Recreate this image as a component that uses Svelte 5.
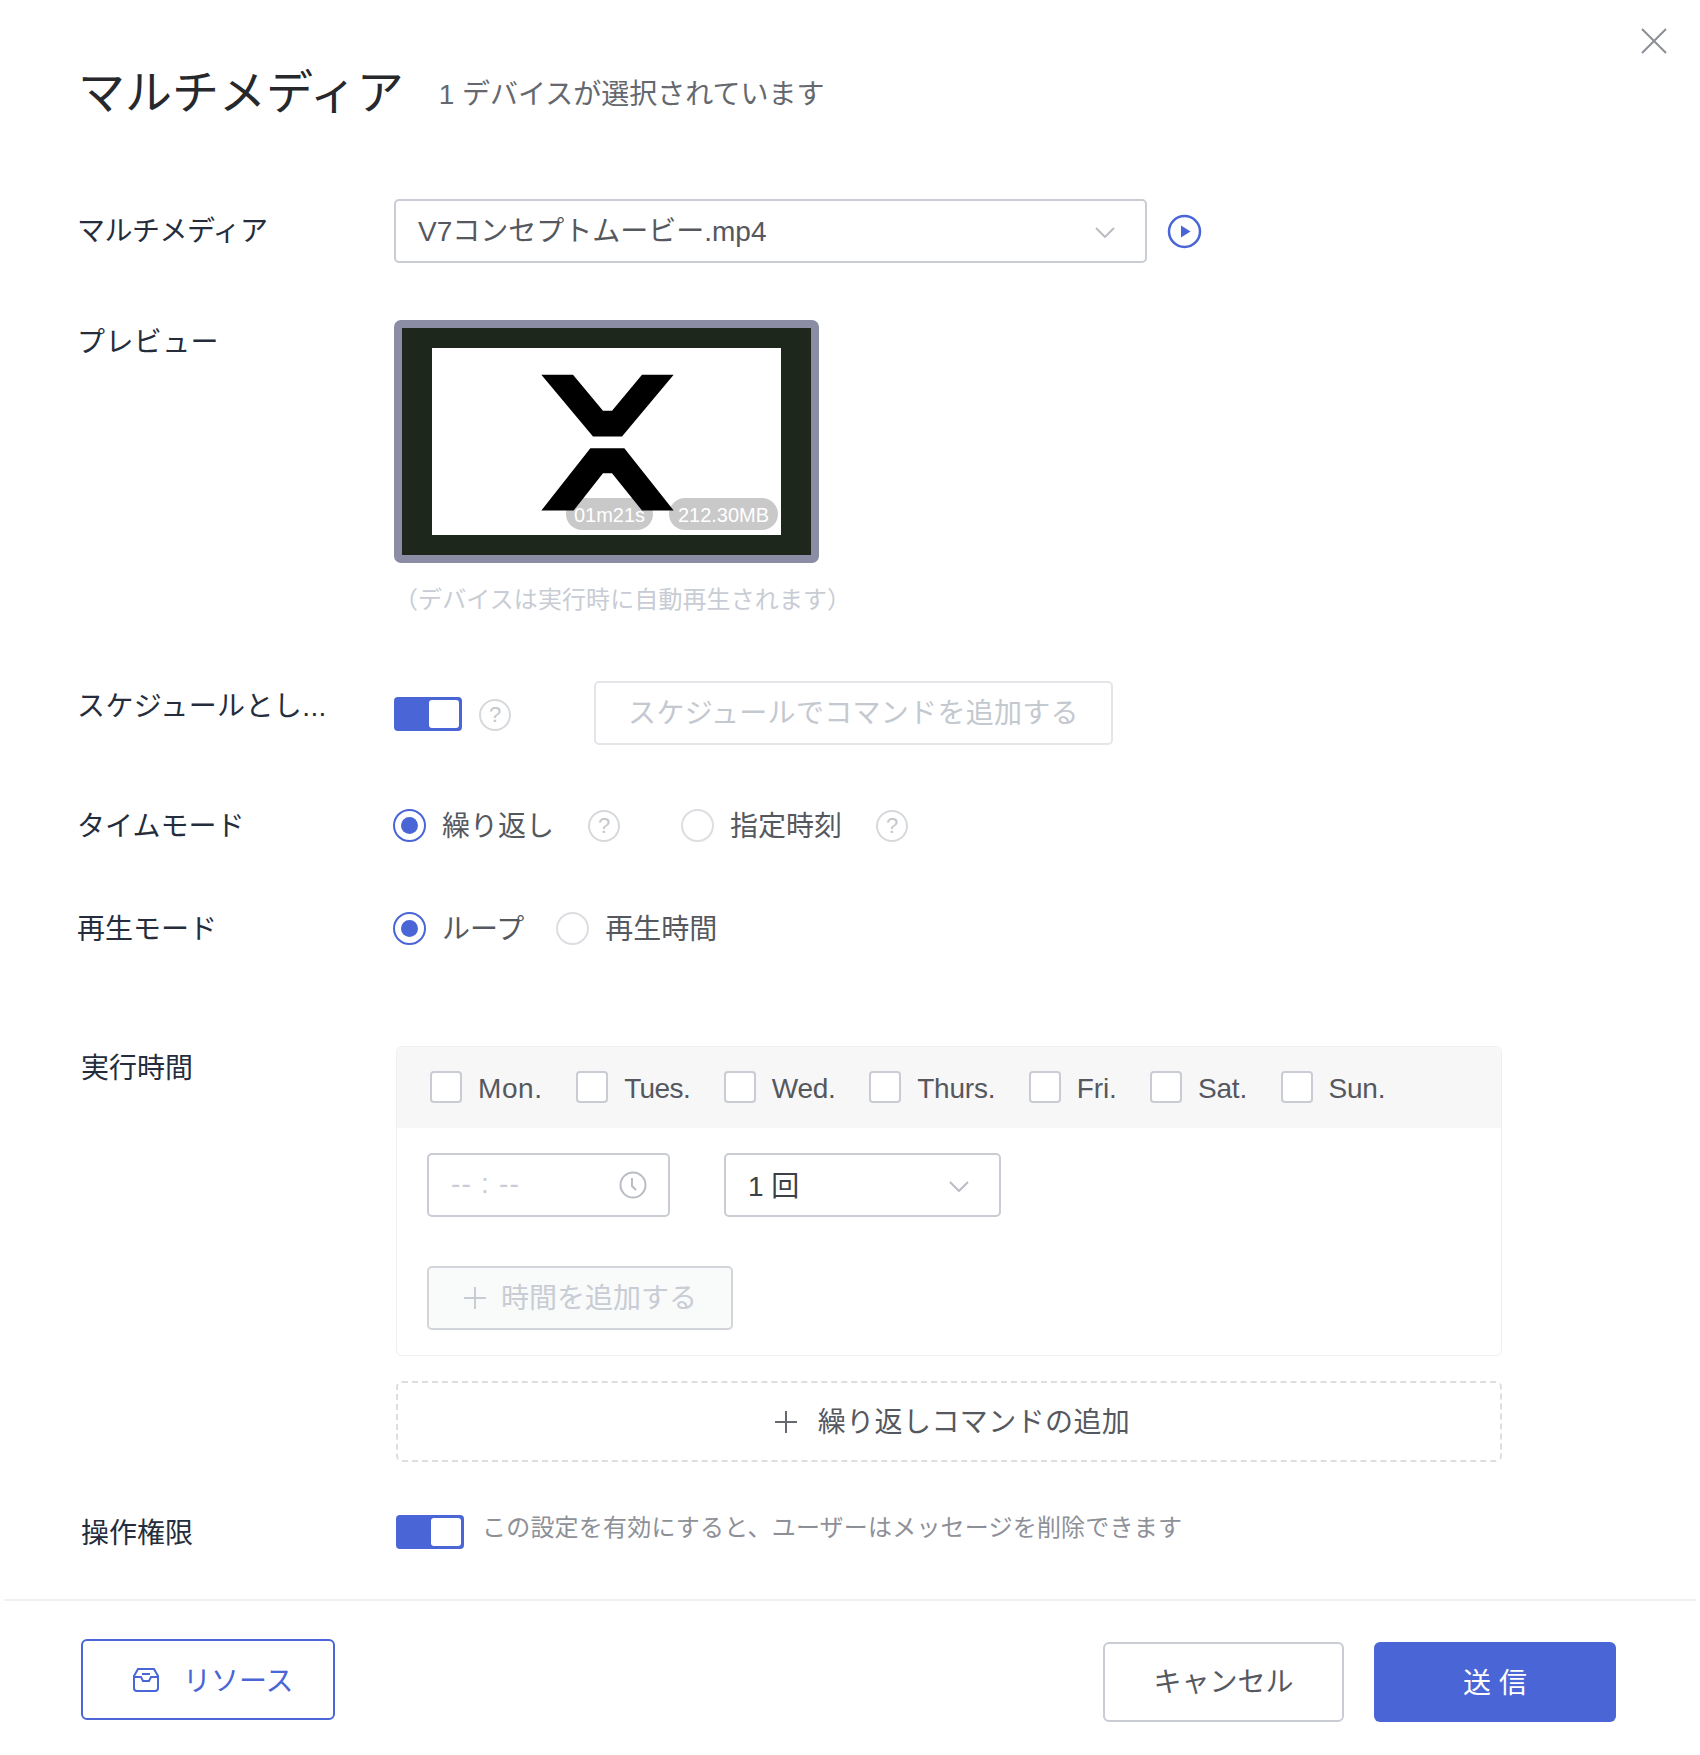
<script>
  const days = ['Mon.', 'Tues.', 'Wed.', 'Thurs.', 'Fri.', 'Sat.', 'Sun.'];
</script>

{#snippet help()}
  <span class="help">?</span>
{/snippet}

{#snippet chevron()}
  <svg class="chevron" viewBox="0 0 20 11" width="20" height="11" fill="none" stroke="#b9bcc3" stroke-width="2"><path d="M1 1l9 9 9-9" /></svg>
{/snippet}

{#snippet plus(color)}
  <svg class="plus" viewBox="0 0 24 24" width="24" height="24" stroke={color} stroke-width="2"><path d="M12 1v22M1 12h22" /></svg>
{/snippet}

<div class="dialog">
  <button class="close" aria-label="close">
    <svg viewBox="0 0 26 26" width="26" height="26" stroke="#8b8e95" stroke-width="2"><path d="M1 1l24 24M25 1L1 25" /></svg>
  </button>

  <header class="head">
    <h1>マルチメディア</h1>
    <span class="sub">1 デバイスが選択されています</span>
  </header>

  <section class="form">
    <div class="row media">
      <div class="label tight">マルチメディア</div>
      <div class="select main">
        <span>V7コンセプトムービー.mp4</span>
        {@render chevron()}
      </div>
      <svg class="play" viewBox="0 0 35 35" width="35" height="35"><circle cx="17.500" cy="17.500" r="15.500" fill="none" stroke="#4a65d6" stroke-width="2.500" /><path d="M14 11.500l9.500 6-9.500 6z" fill="#4a65d6" /></svg>
    </div>

    <div class="row preview-row">
      <div class="label short wide">プレビュー</div>
      <div class="preview-col">
        <div class="frame">
          <div class="screen">
            <span class="badge b1"><span class="badge-text">01m21s</span></span>
            <span class="badge b2"><span class="badge-text">212.30MB</span></span>
            <svg class="logo" viewBox="185 145 1047 560">
              <path d="M513 225H608L698 333H725L815 225H910L755 410H668Z" />
              <path d="M660 445H762L910 632H815L725 520H698L610 632H513Z" />
            </svg>
          </div>
        </div>
        <div class="hint">（デバイスは実行時に自動再生されます）</div>
      </div>
    </div>

    <div class="row schedule">
      <div class="label up">スケジュールとし...</div>
      <span class="switch"></span>
      {@render help()}
      <button class="ghost"><span>スケジュールでコマンドを追加する</span></button>
    </div>

    <div class="row radios first">
      <div class="label">タイムモード</div>
      <label class="radio lead"><i class="on"></i><span>繰り返し</span></label>
      {@render help()}
      <label class="radio second"><i></i><span>指定時刻</span></label>
      {@render help()}
    </div>

    <div class="row radios next">
      <div class="label">再生モード</div>
      <label class="radio lead"><i class="on"></i><span>ループ</span></label>
      <label class="radio third"><i></i><span>再生時間</span></label>
    </div>
  </section>

  <section class="form two">
    <div class="row exec">
      <div class="label short">実行時間</div>
      <div class="exec-col">
        <div class="panel">
          <div class="days">
            {#each days as day}
              <label class="day"><i></i><span>{day}</span></label>
            {/each}
          </div>
          <div class="panel-body">
            <div class="inputs">
              <div class="time">
                <span>-- : --</span>
                <svg viewBox="0 0 28 28" width="28" height="28" fill="none" stroke="#b9bcc3" stroke-width="2"><circle cx="14" cy="14" r="12.500" /><path d="M13 7v8l4 4" /></svg>
              </div>
              <div class="select count">
                <span>1 回</span>
                {@render chevron()}
              </div>
            </div>
            <button class="add-time">{@render plus('#c8ccd4')}<span>時間を追加する</span></button>
          </div>
        </div>
        <button class="dashed">{@render plus('#666a70')}<span>繰り返しコマンドの追加</span></button>
      </div>
    </div>

    <div class="row perm">
      <div class="label">操作権限</div>
      <span class="switch"></span>
      <span class="perm-text">この設定を有効にすると、ユーザーはメッセージを削除できます</span>
    </div>
  </section>

  <div class="divider"></div>

  <footer class="foot">
    <button class="resource">
      <svg viewBox="0 0 28 26" width="28" height="26" fill="none" stroke="#4a65d6" stroke-width="2"><path d="M6 2h16l4 7v12a3 3 0 0 1-3 3H5a3 3 0 0 1-3-3V9z" /><path d="M2 10h7l2 4h6l2-4h7" /><path d="M10 7h8" /></svg>
      <span>リソース</span>
    </button>
    <div class="foot-right">
      <button class="cancel"><span>キャンセル</span></button>
      <button class="send"><span>送 信</span></button>
    </div>
  </footer>
</div>

<style>
  :global(body) {
    margin: 0;
    background: #fff;
  }

  .dialog {
    position: relative;
    width: 1700px;
    height: 1755px;
    box-sizing: border-box;
    overflow: hidden;
    font-family: "Liberation Sans", "Noto Sans CJK JP", sans-serif;
    font-size: 28px;
    color: #55585e;
    background: #fff;
  }

  button {
    font: inherit;
    background: none;
    padding: 0;
    margin: 0;
    cursor: pointer;
  }

  button span,
  .select span {
    position: relative;
    top: -2px;
  }

  .close {
    position: absolute;
    top: 28px;
    right: 33px;
    width: 26px;
    height: 26px;
    border: 0;
    line-height: 0;
  }

  .head {
    display: flex;
    align-items: center;
    padding: 62px 0 0 78px;
    height: 60px;
  }

  h1 {
    margin: 2px 0 0;
    font-size: 47px;
    font-weight: 400;
    line-height: 60px;
    color: #26282c;
  }

  .sub {
    margin: 6px 0 0 35px;
    line-height: 60px;
    color: #65686e;
  }

  .form {
    padding: 77px 0 0 77px;
  }

  .form.two {
    padding: 98px 0 0 81px;
  }

  .row {
    display: flex;
    align-items: center;
  }

  .label {
    position: relative;
    top: 2px;
    flex: none;
    width: 317px;
    color: #252d3c;
    line-height: 40px;
  }

  .label.tight {
    top: 1px;
    letter-spacing: -0.5px;
  }

  .label.wide {
    letter-spacing: 0.4px;
  }

  .form.two .label {
    width: 315px;
  }

  .label.short {
    align-self: flex-start;
    margin-top: 1px;
  }

  .label.up {
    margin-top: -16px;
    letter-spacing: 0.4px;
  }

  .select {
    display: flex;
    align-items: center;
    justify-content: space-between;
    box-sizing: border-box;
    height: 64px;
    border: 2px solid #c9ccd2;
    border-radius: 5px;
    background: #fff;
  }

  .select svg {
    position: relative;
    top: 1px;
  }

  .select.main {
    width: 753px;
    padding: 0 30px 0 22px;
  }

  .select.count {
    width: 277px;
    padding: 0 30px 0 22px;
    color: #3d4046;
  }

  .select.count span {
    top: -1px;
  }

  .play {
    margin-left: 20px;
  }

  .preview-row {
    align-items: flex-start;
    margin-top: 57px;
  }

  .frame {
    box-sizing: border-box;
    width: 425px;
    height: 243px;
    padding: 20px 30px 20px 30px;
    border: 8px solid #8a8da3;
    border-radius: 7px;
    background: #1e271c;
  }

  .screen {
    position: relative;
    width: 349px;
    height: 187px;
    background: #fff;
  }

  .logo {
    position: absolute;
    inset: 0;
    z-index: 1;
    width: 100%;
    height: 100%;
  }

  .logo path {
    fill: #000;
  }

  .badge {
    position: absolute;
    top: 150px;
    height: 32px;
    border-radius: 16px;
    background: #c9c9c9;
    font-size: 20px;
    line-height: 34px;
    text-align: center;
    color: #fff;
  }

  .badge-text {
    position: relative;
    z-index: 2;
  }

  .b1 {
    left: 134px;
    width: 87px;
  }

  .b2 {
    left: 237px;
    width: 109px;
  }

  .hint {
    margin: 19px 0 0;
    font-size: 24px;
    line-height: 36px;
    letter-spacing: 0.1px;
    color: #c8ccd4;
  }

  .schedule {
    height: 64px;
    margin-top: 63px;
  }

  .switch {
    position: relative;
    top: 1px;
    flex: none;
    box-sizing: border-box;
    width: 68px;
    height: 34px;
    border-radius: 4px;
    background: #4a65d6;
  }

  .switch::after {
    content: "";
    position: absolute;
    top: 3px;
    right: 3px;
    width: 30px;
    height: 28px;
    border-radius: 3px;
    background: #fff;
  }

  .help {
    position: relative;
    top: 2px;
    flex: none;
    box-sizing: border-box;
    width: 32px;
    height: 32px;
    margin-left: 17px;
    border: 2px solid #d6d8dc;
    border-radius: 50%;
    font-size: 22px;
    line-height: 28px;
    text-align: center;
    color: #c4c7cc;
  }

  .ghost {
    box-sizing: border-box;
    width: 519px;
    height: 64px;
    margin-left: 83px;
    border: 2px solid #e3e5e9;
    border-radius: 5px;
    letter-spacing: 0.3px;
    color: #c4c8cf;
    background: #fff;
  }

  .radios {
    height: 40px;
  }

  .radios.first {
    margin-top: 60px;
  }

  .radios.next {
    margin-top: 63px;
  }

  .radio {
    display: flex;
    align-items: center;
    line-height: 40px;
    color: #55585e;
  }

  .radio.lead {
    margin-left: -1px;
  }

  .radio span {
    position: relative;
    top: 2px;
  }

  .radio i {
    position: relative;
    box-sizing: border-box;
    width: 33px;
    height: 33px;
    margin-right: 16px;
    border: 2px solid #dcdee2;
    border-radius: 50%;
  }

  .radio i.on {
    border-color: #4a65d6;
  }

  .radio i.on::after {
    content: "";
    position: absolute;
    inset: 6px;
    border-radius: 50%;
    background: #4a65d6;
  }

  .radio.second {
    margin-left: 61px;
  }

  .radio.third {
    margin-left: 32px;
  }

  .radios .help {
    top: 1px;
    margin-left: 34px;
  }

  .exec {
    align-items: flex-start;
  }

  .exec-col {
    display: flex;
    flex-direction: column;
    gap: 25px;
    width: 1106px;
  }

  .panel {
    box-sizing: border-box;
    height: 310px;
    border: 1px solid #eeeff1;
    border-radius: 6px;
  }

  .days {
    display: flex;
    align-items: center;
    gap: 33.500px;
    height: 81px;
    padding-left: 33px;
    background: #f7f7f8;
  }

  .day {
    display: flex;
    align-items: center;
    letter-spacing: -0.2px;
    color: #55585e;
  }

  .day:nth-child(1) {
    letter-spacing: 0.6px;
  }

  .day:nth-child(2) {
    letter-spacing: -0.6px;
  }

  .day span {
    position: relative;
    top: 1px;
  }

  .day i {
    box-sizing: border-box;
    width: 32px;
    height: 32px;
    margin: -1px 16px 0 0;
    border: 2px solid #c9ccd2;
    border-radius: 4px;
    background: #fff;
  }

  .panel-body {
    padding: 25px 0 0 30px;
  }

  .inputs {
    display: flex;
    gap: 54px;
  }

  .time {
    display: flex;
    align-items: center;
    justify-content: space-between;
    box-sizing: border-box;
    width: 243px;
    height: 64px;
    padding: 0 22px;
    border: 2px solid #c9ccd2;
    border-radius: 5px;
    letter-spacing: 1.2px;
    color: #c8ccd4;
  }

  .time span {
    position: relative;
    top: -1px;
  }

  .time svg {
    margin-right: -1px;
  }

  .add-time {
    display: flex;
    align-items: center;
    box-sizing: border-box;
    width: 306px;
    height: 64px;
    margin-top: 49px;
    padding-left: 34px;
    border: 2px solid #d2d5da;
    border-radius: 5px;
    background: #f9fafa;
    color: #c8ccd4;
  }

  .plus {
    margin-right: 14px;
  }

  .dashed {
    display: flex;
    align-items: center;
    justify-content: center;
    box-sizing: border-box;
    height: 81px;
    padding-left: 6px;
    border: 2px dashed #dcdee2;
    border-radius: 6px;
    letter-spacing: 0.4px;
    color: #55585e;
    background: #fff;
  }

  .dashed .plus {
    margin-right: 20px;
  }

  .perm {
    margin-top: 52px;
    height: 34px;
  }

  .perm .label {
    margin-top: 2px;
  }

  .perm-text {
    margin: -6px 0 0 18px;
    font-size: 24px;
    line-height: 34px;
    letter-spacing: 0.2px;
    color: #8e9097;
  }

  .divider {
    height: 2px;
    margin: 51px 4px 0;
    background: #f1f2f3;
  }

  .foot {
    display: flex;
    justify-content: space-between;
    padding: 38px 84px 0 81px;
  }

  .foot-right {
    display: flex;
    gap: 30px;
    padding-top: 3px;
  }

  .resource {
    display: flex;
    align-items: center;
    box-sizing: border-box;
    width: 254px;
    height: 81px;
    padding-left: 49px;
    border: 2px solid #4a65d6;
    border-radius: 6px;
    color: #4a65d6;
    background: #fff;
    gap: 23px;
  }

  .resource span {
    top: -1px;
  }

  .cancel,
  .send {
    box-sizing: border-box;
    height: 80px;
    border-radius: 6px;
  }

  .cancel {
    width: 241px;
    border: 2px solid #c9ccd2;
    color: #55585e;
    background: #fff;
  }

  .send {
    width: 242px;
    border: 0;
    color: #fff;
    background: #4a65d6;
  }

  .send span {
    top: -1px;
  }
</style>
